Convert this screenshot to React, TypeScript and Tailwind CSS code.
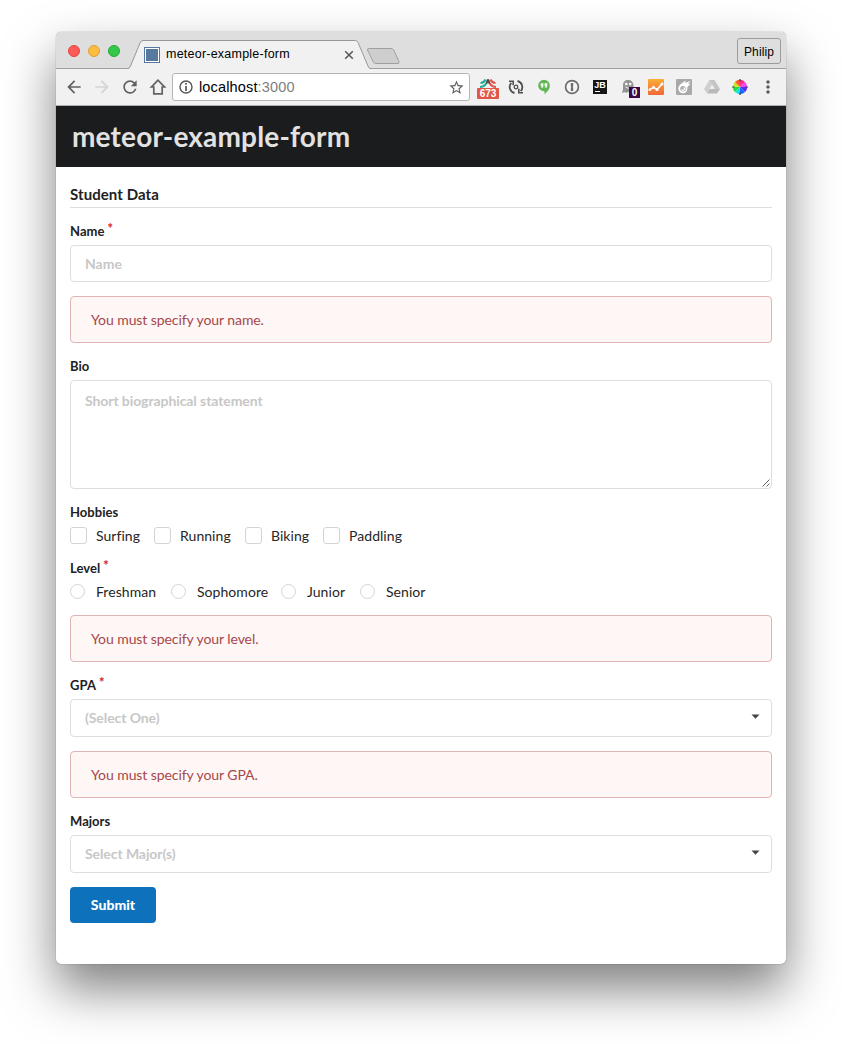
import React from "react";
import { MdArrowBack, MdArrowForward, MdRefresh, MdStarBorder, MdMoreVert } from "react-icons/md";

function Label({ text, required }: { text: string; required?: boolean }) {
  return (
    <div className="mb-[5px] flex h-[18px] items-center text-[13px] leading-[18px] font-bold text-[#212121]">
      <span className="tracking-[0.03px]">{text}</span>
      {required && <span className="relative -top-[3px] ml-[3px] font-black text-[#db2828]">*</span>}
    </div>
  );
}

function ErrorMessage({ text }: { text: string }) {
  return (
    <div className="flex h-[47px] items-center rounded-[4px] border border-[#e0b4b4] bg-[#fff6f6] px-5 pb-px text-[14px] tracking-[-0.08px] text-[#a5484a]">
      {text}
    </div>
  );
}

function Select({ text }: { text: string }) {
  return (
    <div className="flex h-[38px] items-center justify-between rounded-[4px] border border-[#dededf] pr-[11px] pl-[14px] text-[14px] text-[#c7c7c7]">
      <span className="pb-[2px] font-bold tracking-[-0.08px]">{text}</span>
      <svg width="9" height="5" viewBox="0 0 9 5" className="mb-1">
        <path d="M.5.5h8L4.5 4.7z" fill="#444" />
      </svg>
    </div>
  );
}

function Option({ text, round, width }: { text: string; round?: boolean; width: string }) {
  return (
    <label className={`flex items-start text-[14px] leading-5 tracking-[0.05px] text-[#262626] ${width}`}>
      {round ? (
        <span className="mt-[2px] mr-[11px] h-[15px] w-[15px] rounded-full border border-[#d4d4d5]" />
      ) : (
        <span className="mt-px mr-[9px] h-[17px] w-[17px] rounded-[3px] border border-[#d4d4d5]" />
      )}
      <span>{text}</span>
    </label>
  );
}

function TabStrip() {
  return (
    <div className="flex h-[37px] border-b border-[#a0a0a0] bg-[#dedede]">
      <div className="flex w-[72px] items-center gap-2 pt-[2px] pl-3">
        <span className="h-3 w-3 rounded-full border border-[#e2463f] bg-[#fc5b57]" />
        <span className="h-3 w-3 rounded-full border border-[#dfa034] bg-[#fdbc40]" />
        <span className="h-3 w-3 rounded-full border border-[#27aa35] bg-[#34c84a]" />
      </div>
      <div className="relative h-[37px] w-[242px]">
        <svg className="absolute top-0 left-0" width="242" height="37" viewBox="0 0 242 37">
          <path d="M0 37L.5 36.5C2 36 2.5 34.5 3 33.5L12 11Q13 8.5 15 8.5H227.500Q229 8.500 230 10.500L240 34Q241 36.500 242 36.500V37Z" fill="#f1f1f1" />
          <path d="M0 36.500Q1.500 36.500 2.500 34L12 11Q13 8.500 15 8.500H227.500Q229 8.500 230 10.500L240 34Q241 36.500 242 36.500" fill="none" stroke="#989898" />
        </svg>
        <div className="relative flex h-[37px] items-center pt-2 pl-4">
          <span className="h-4 w-4 border border-[#57799f] bg-white p-px">
            <span className="block h-full w-full bg-[#57799f]" />
          </span>
          <span className="ml-[6px] w-[178px] text-[12.5px] tracking-[0.23px] text-black">meteor-example-form</span>
          <svg width="10" height="10" viewBox="0 0 10 10">
            <path d="M1.200 1.200l7.600 7.600M8.800 1.200L1.200 8.800" stroke="#555" strokeWidth="1.5" />
          </svg>
        </div>
      </div>
      <svg className="mt-[15px] -ml-[4px]" width="36" height="18" viewBox="0 0 36 18">
        <path d="M3 1.500H25Q27 1.500 28 3.500L33 14.500Q33.500 16.500 32 16.500H10Q8 16.500 7 14.500L1.500 3Q1 1.500 3 1.500Z" fill="#cecece" stroke="#a0a0a0" />
      </svg>
      <div className="mt-[6px] mr-[5px] ml-auto flex h-[26px] w-[44px] items-center justify-center rounded-[3px] border border-[#9c9c9c] pt-px text-[12px] tracking-[0.1px] text-black">
        Philip
      </div>
    </div>
  );
}

function Extensions() {
  return (
    <div className="ml-1 flex items-center">
      <div className="flex w-7 flex-col items-center pt-[3px]">
        <svg width="18" height="9" viewBox="0 0 18 9">
          <path d="M1.500 4Q5 4 6.500 .5M1 8Q7 8 9 .5" fill="none" stroke="#1bab99" strokeWidth="2" />
          <path d="M16.500 4Q13 4 11.500 .5M17 8Q11 8 9 .5" fill="none" stroke="#d8564d" strokeWidth="2" />
          <path d="M9 .5L7.500 4.500M9 .5l1.500 4" stroke="#554342" strokeWidth="1.500" />
        </svg>
        <span className="h-[11px] w-[22px] rounded-[1px] bg-[#e25647] text-center text-[10px] leading-[11px] font-bold text-white">673</span>
      </div>
      <div className="flex w-7 justify-center">
        <svg width="16" height="16" viewBox="0 0 16 16" fill="none" stroke="#505050" strokeWidth="1.800">
          <path d="M6.500 14A6.200 6.200 0 0 1 3.300 3.800" />
          <path d="M9.500 2A6.200 6.200 0 0 1 12.700 12.200" />
          <path d="M1 2.200h4.200v4" strokeWidth="1.600" />
          <path d="M15 13.800h-4.200v-4" strokeWidth="1.600" />
          <circle cx="8" cy="8" r="1.800" strokeWidth="1.300" />
        </svg>
      </div>
      <div className="flex w-7 justify-center">
        <svg width="14" height="16" viewBox="0 0 14 16">
          <path d="M7 .7a5.800 5.800 0 0 1 5.800 5.800c0 4-2.800 6.500-5.300 8.800v-3H7A5.800 5.800 0 0 1 7 .7z" fill="#61b553" />
          <path d="M3.700 4.300h2.700v3L5.200 9H4.200l.7-1.800H3.700zM7.600 4.300h2.700v3L9.100 9H8.100l.7-1.800H7.600z" fill="#fff" />
        </svg>
      </div>
      <div className="flex w-7 justify-center">
        <svg width="16" height="16" viewBox="0 0 16 16">
          <circle cx="8" cy="8" r="6.400" fill="#f5f5f5" stroke="#6d6d6d" strokeWidth="1.700" />
          <path d="M6.800 4h2.400v3l-.6.700.6.700V12H6.800V9l.6-.7-.6-.7z" fill="#6d6d6d" />
        </svg>
      </div>
      <div className="flex w-7 justify-center">
        <div className="flex h-[14px] w-[14px] flex-col bg-[#161616] px-[1px] pt-px text-white">
          <span className="text-center text-[9px] leading-[8px] font-bold">JB</span>
          <span className="mt-[2px] ml-px h-px w-[5px] bg-white" />
        </div>
      </div>
      <div className="relative flex w-7 justify-center">
        <svg width="14" height="16" viewBox="0 0 14 16">
          <path d="M1 14L2 10V6.500C2 3 4 1 7 1s5.500 2 5.500 5.500V14l-1.700-1L8.700 14 7 12.700 5.300 14l-1.600-1z" fill="#949494" />
          <circle cx="5.300" cy="5" r="1.300" fill="#fff" />
          <circle cx="9.200" cy="5" r="1.300" fill="#fff" />
          <path d="M4.500 8Q7 10.500 10 8" fill="none" stroke="#eee" />
        </svg>
        <span className="absolute top-[8px] left-[15px] h-[11px] w-[11px] bg-[#3b0a45] text-center text-[10px] leading-[11px] font-bold text-white">0</span>
      </div>
      <div className="flex w-7 justify-center">
        <svg width="16" height="16" viewBox="0 0 16 16">
          <defs>
            <linearGradient id="analytics" x2="0" y2="1">
              <stop stopColor="#f9ad36" />
              <stop offset="1" stopColor="#f26738" />
            </linearGradient>
          </defs>
          <rect width="16" height="16" rx="1" fill="url(#analytics)" />
          <path d="M1 11L5.500 8.500l3.500 2 5-5.500" fill="none" stroke="#fff" strokeWidth="1.500" />
          <circle cx="1.800" cy="10.800" r="1.300" fill="#fff" />
          <circle cx="5.500" cy="8.300" r="1.500" fill="#fff" />
          <circle cx="9" cy="10.500" r="1.500" fill="#fff" />
          <circle cx="14" cy="5" r="1.500" fill="#fff" />
        </svg>
      </div>
      <div className="flex w-7 justify-center">
        <svg width="16" height="16" viewBox="0 0 16 16">
          <rect width="16" height="16" rx="1" fill="#a9a9a9" />
          <path d="M2.500 10.500C1.500 7 5 4.500 10 1.500L8.800 4 14.500 2 12 5l2.500-.5-3.300 4C12 12 9.500 14.500 7 14.300 4.500 14.300 3 13 2.500 10.500z" fill="#fff" />
          <circle cx="7" cy="9.800" r="2.700" fill="#a9a9a9" />
          <path d="M5.500 10.500a1.500 1.500 0 1 0 2-2" fill="none" stroke="#fff" strokeWidth="1.300" />
        </svg>
      </div>
      <div className="flex w-7 justify-center">
        <svg width="16" height="16" viewBox="0 0 16 16">
          <path d="M5.500 1h5L8 5.500 3 14.500 0 10z" fill="#cfcfcf" />
          <path d="M10.500 1L16 10h-5.200L5.500 1z" fill="#c4c4c4" />
          <path d="M3 14.500L5.500 10H16l-3 4.500z" fill="#b9b9b9" />
          <path d="M8 6l2.300 4H5.700z" fill="#eee" />
        </svg>
      </div>
      <div className="flex w-7 justify-center">
        <svg width="16" height="16" viewBox="0 0 16 16">
          <g transform="translate(8 8)">
            <path d="M0 0V-7.200A7.200 7.200 0 0 1 5.100-5.100Z" fill="#ff2a8a" />
            <path d="M0 0L5.100-5.100A7.200 7.200 0 0 1 7.200 0Z" fill="#f046f0" />
            <path d="M0 0H7.200A7.200 7.200 0 0 1 5.100 5.100Z" fill="#5a2cf5" />
            <path d="M0 0L5.100 5.100A7.200 7.200 0 0 1 0 7.200Z" fill="#1768ff" />
            <path d="M0 0V7.200A7.200 7.200 0 0 1-5.100 5.100Z" fill="#1fe0e0" />
            <path d="M0 0L-5.100 5.100A7.200 7.200 0 0 1-7.200 0Z" fill="#22e040" />
            <path d="M0 0H-7.200A7.200 7.200 0 0 1-5.100-5.100Z" fill="#c8e82e" />
            <path d="M0 0L-5.100-5.100A7.200 7.200 0 0 1 0-7.200Z" fill="#ff5a28" />
            <path d="M-8 0h2.500M5.500 0H8M0-8v2.500M0 5.500V8" stroke="#444" strokeWidth="1.200" />
          </g>
        </svg>
      </div>
      <div className="flex w-7 justify-center">
        <MdMoreVert size={20} color="#5a5a5a" />
      </div>
    </div>
  );
}

function Toolbar() {
  return (
    <div className="flex h-[37px] items-center border-b border-[#b0b0b0] bg-[#f1f1f1] pl-1">
      <div className="flex w-7 justify-center"><MdArrowBack size={20} color="#616161" /></div>
      <div className="flex w-7 justify-center"><MdArrowForward size={20} color="#d4d4d4" /></div>
      <div className="flex w-7 justify-center"><MdRefresh size={20} color="#616161" /></div>
      <div className="flex w-7 justify-center">
        <svg width="18" height="18" viewBox="0 0 18 18">
          <path d="M9 2.200L2.500 9H4.800v6.800h8.400V9h2.300z" fill="none" stroke="#616161" strokeWidth="1.700" />
        </svg>
      </div>
      <div className="flex h-7 w-[298px] items-center rounded-[3px] border border-[#b5b5b5] bg-white pl-[6px]">
        <svg width="14" height="14" viewBox="0 0 14 14">
          <circle cx="7" cy="7" r="6" fill="none" stroke="#555" strokeWidth="1.400" />
          <path d="M7 3v1.700M7 6v5" stroke="#555" strokeWidth="1.700" />
        </svg>
        <span className="ml-[6px] flex-1 pt-px text-[14.500px] tracking-[0.15px] text-black">localhost<span className="text-[#808080]">:3000</span></span>
        <MdStarBorder className="mr-1" size={17} color="#616161" />
      </div>
      <Extensions />
    </div>
  );
}

export default function App() {
  return (
    <div className="h-[1044px] w-[842px] overflow-hidden bg-white pt-8 pl-14">
      <div className="h-[932px] w-[730px] overflow-hidden rounded-[5px] bg-white font-['Lato',sans-serif] shadow-[0_0_1px_rgba(0,0,0,0.6),0_25px_50px_rgba(0,0,0,0.5)]">
        <div className="font-['Liberation_Sans',sans-serif]">
          <TabStrip />
          <Toolbar />
        </div>
        <h1 className="flex h-[61px] items-center bg-[#1b1c1d] pb-[2px] pl-4 text-[28px] font-bold tracking-[0.17px] text-[#e2e2e2]">meteor-example-form</h1>
        <div className="px-[14px]">
          <h4 className="h-[41px] border-b border-[#dededf] pt-[16px] text-[15px] leading-[22px] font-bold tracking-[0.08px] text-[#212121]">Student Data</h4>
          <div className="mt-[14px]">
            <Label text="Name" required />
            <div className="flex h-[37px] items-center rounded-[4px] border border-[#dededf] px-[14px] pb-px text-[14px] font-bold text-[#c7c7c7]">Name</div>
          </div>
          <div className="mt-[14px]"><ErrorMessage text="You must specify your name." /></div>
          <div className="mt-[14px]">
            <Label text="Bio" />
            <div className="flex h-[109px] items-start justify-between rounded-[4px] border border-[#dededf] pl-[14px] text-[14px] font-bold text-[#c7c7c7]">
              <span className="pt-[11px] leading-[18px] tracking-[-0.08px]">Short biographical statement</span>
              <svg className="mr-px mb-px self-end" width="8" height="8" viewBox="0 0 8 8">
                <path d="M.5 7.500l7-7M4.500 7.500l3-3" stroke="#555" strokeWidth="0.9" />
              </svg>
            </div>
          </div>
          <div className="mt-[14px]">
            <Label text="Hobbies" />
            <div className="flex h-5 items-center">
              <Option text="Surfing" width="w-[84px]" />
              <Option text="Running" width="w-[91px]" />
              <Option text="Biking" width="w-[78px]" />
              <Option text="Paddling" width="w-[90px]" />
            </div>
          </div>
          <div className="mt-[13px]">
            <Label text="Level" required />
            <div className="flex h-5 items-center">
              <Option round text="Freshman" width="w-[101px]" />
              <Option round text="Sophomore" width="w-[110px]" />
              <Option round text="Junior" width="w-[79px]" />
              <Option round text="Senior" width="w-[70px]" />
            </div>
          </div>
          <div className="mt-[13px]"><ErrorMessage text="You must specify your level." /></div>
          <div className="mt-[14px]">
            <Label text="GPA" required />
            <Select text="(Select One)" />
          </div>
          <div className="mt-[14px]"><ErrorMessage text="You must specify your GPA." /></div>
          <div className="mt-[14px]">
            <Label text="Majors" />
            <Select text="Select Major(s)" />
          </div>
          <button className="mt-[14px] h-9 w-[86px] rounded-[4px] bg-[#0d71bb] pb-[2px] text-[14px] font-black text-white">Submit</button>
        </div>
      </div>
    </div>
  );
}
